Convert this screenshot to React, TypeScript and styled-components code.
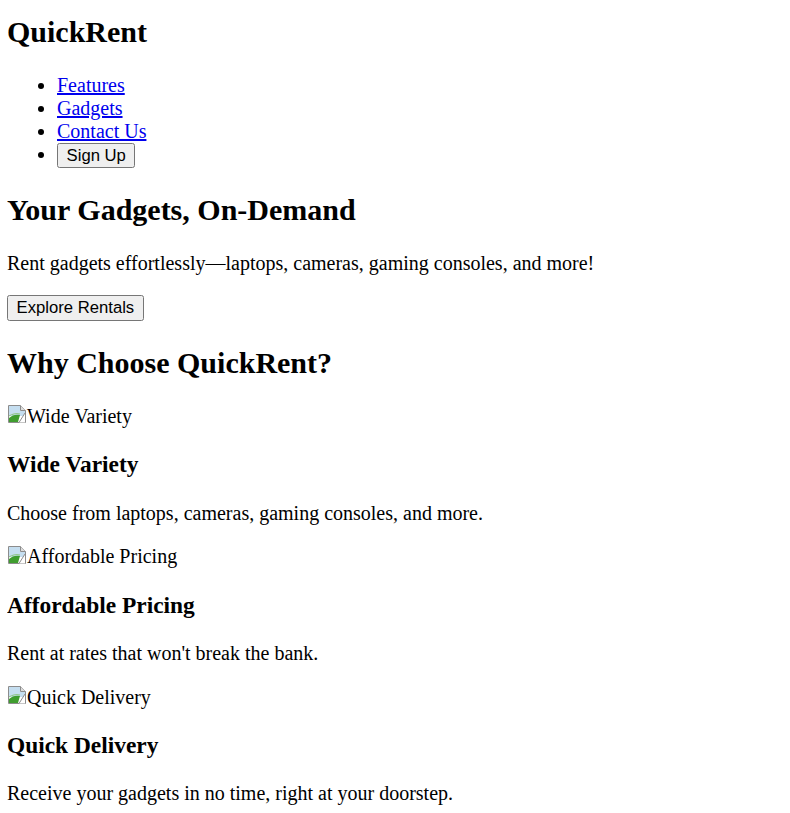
import React from "react";
import styled, { createGlobalStyle } from "styled-components";

const Global = createGlobalStyle`
  body {
    margin: 0 7px 10px;
    font-family: "Liberation Serif", "Times New Roman", serif;
    font-size: 20px;
    color: #000;
    background: #fff;
  }
`;

const Title = styled.h1`
  font-size: 30px;
  font-weight: bold;
  margin: 15px 0 24.9px;
`;

const NavList = styled.ul`
  margin: 20px 0;
  padding-left: 50px;
  list-style: disc;
`;

const NavLink = styled.a`
  color: #0000ee;
  text-decoration: underline;
`;

const Button = styled.button`
  font-family: Arial, "Liberation Sans", sans-serif;
  font-size: 16.667px;
  line-height: normal;
  padding: 2px 8.6px 1.5px;
  margin: 0;
  border: 1px solid #767676;
  border-radius: 2.5px;
  background: #efefef;
  color: #000;
`;

const HeroTitle = styled.h2`
  font-size: 30px;
  font-weight: bold;
  margin: 24.9px 0;
`;

const Text = styled.p`
  margin: 20px 0;
`;

const FeatureTitle = styled.h3`
  font-size: 23.4px;
  font-weight: bold;
  margin: 23.4px 0;
`;

const BrokenIcon = styled.svg`
  width: 20px;
  height: 20px;
  vertical-align: -1.5px;
`;

function BrokenImage({ alt }: { alt: string }) {
  return (
    <span role="img" aria-label={alt}>
      <BrokenIcon viewBox="0 0 20 20">
        <path d="M1.5 1.5h12l5 5v12h-17z" fill="#ffffff" stroke="#8c8c8c" />
        <path d="M13.5 1.5v5h5" fill="#dcdcdc" stroke="#8c8c8c" />
        <path d="M2 2h11v5h5v5H2z" fill="#c5def0" />
        <path d="M2 18v-4c3-3 7-4 11-3l-2 7z" fill="#3f9d2f" />
        <path d="M2 12c3-2 7-3 11-2" fill="none" stroke="#8cc47e" strokeWidth="1" />
        <path d="M18 9l-6 9.5h6z" fill="#ffffff" />
        <path d="M18 9l-6 9.5" fill="none" stroke="#8c8c8c" />
      </BrokenIcon>
      {alt}
    </span>
  );
}

const features = [
  {
    name: "Wide Variety",
    text: "Choose from laptops, cameras, gaming consoles, and more.",
  },
  { name: "Affordable Pricing", text: "Rent at rates that won't break the bank." },
  { name: "Quick Delivery", text: "Receive your gadgets in no time, right at your doorstep." },
];

export default function App() {
  return (
    <>
      <Global />
      <header>
        <Title>QuickRent</Title>
        <nav>
          <NavList>
            <li><NavLink href="#features">Features</NavLink></li>
            <li><NavLink href="#gadgets">Gadgets</NavLink></li>
            <li><NavLink href="#contact">Contact Us</NavLink></li>
            <li><Button>Sign Up</Button></li>
          </NavList>
        </nav>
      </header>
      <section>
        <HeroTitle>Your Gadgets, On-Demand</HeroTitle>
        <Text>Rent gadgets effortlessly—laptops, cameras, gaming consoles, and more!</Text>
        <Button>Explore Rentals</Button>
      </section>
      <section id="features">
        <HeroTitle>Why Choose QuickRent?</HeroTitle>
        {features.map((f) => (
          <div key={f.name}>
            <BrokenImage alt={f.name} />
            <FeatureTitle>{f.name}</FeatureTitle>
            <Text>{f.text}</Text>
          </div>
        ))}
      </section>
    </>
  );
}
